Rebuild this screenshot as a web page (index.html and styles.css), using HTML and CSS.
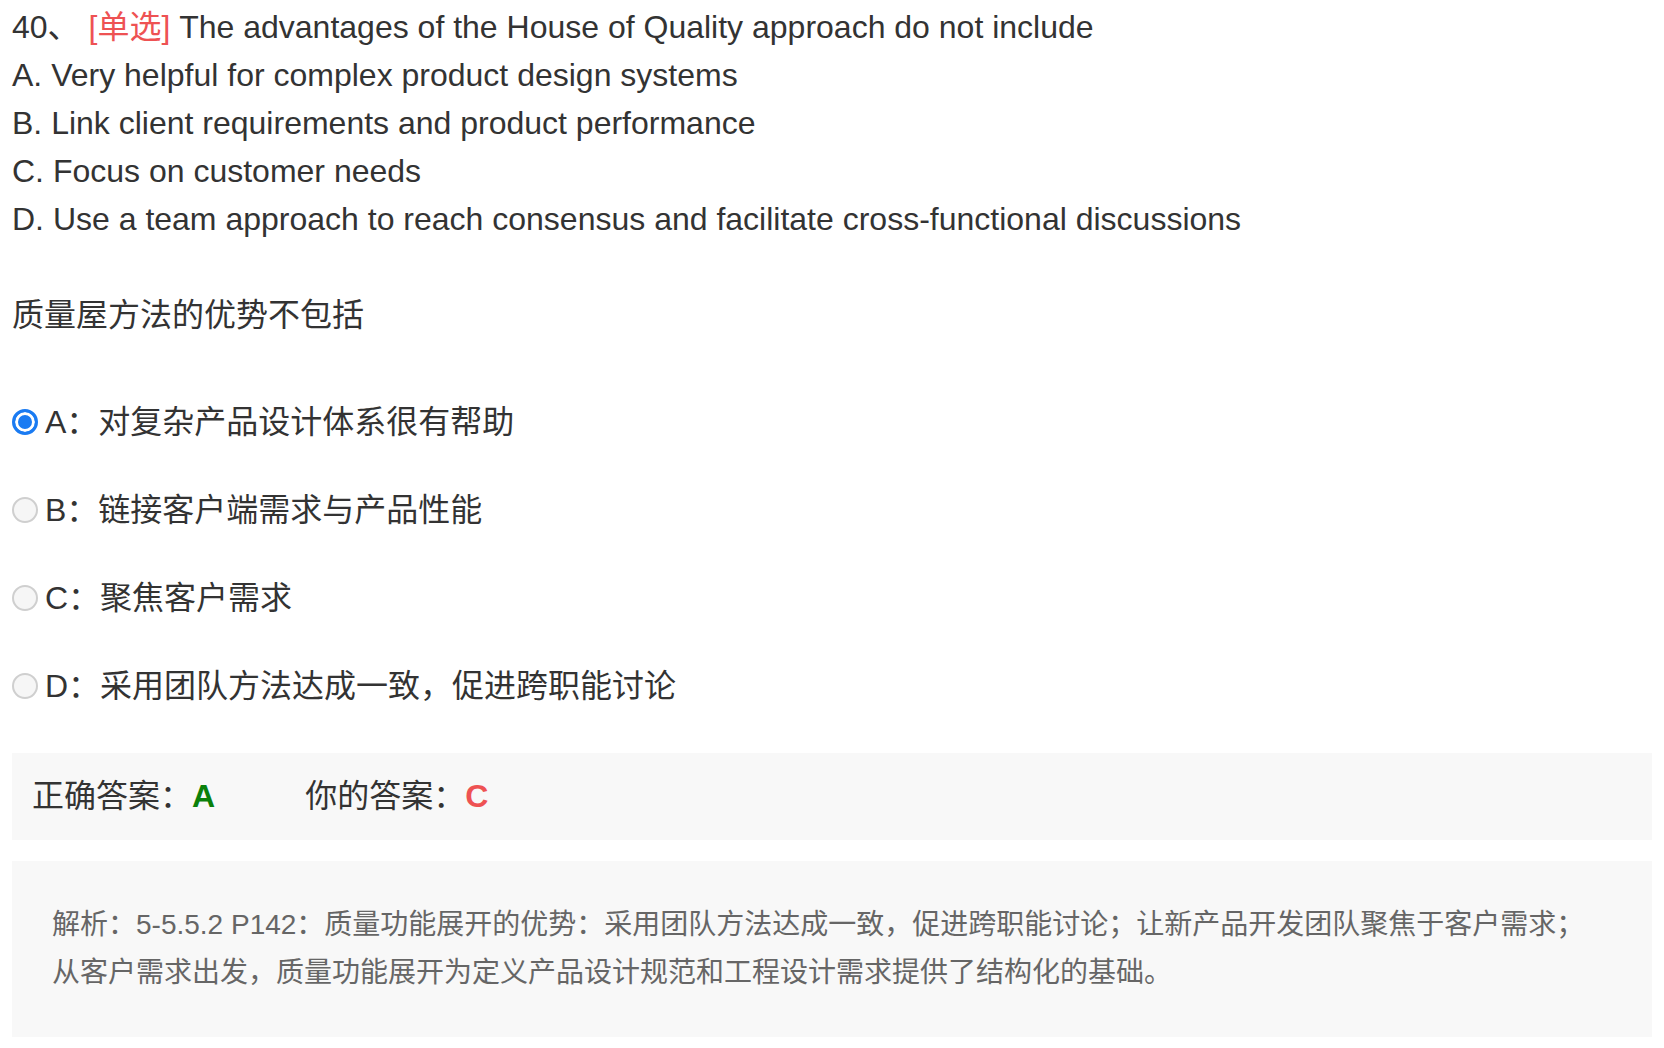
FILE: index.html
```html
<!DOCTYPE html>
<html lang="zh-CN">
<head>
<meta charset="utf-8">
<title>Question 40</title>
<link rel="stylesheet" href="styles.css">
</head>
<body>
<div class="page">
  <div class="question">
    <div class="q-line"><span>40、</span> <span class="tag">[单选]</span> The advantages of the House of Quality approach do not include</div>
    <div class="q-line">A. Very helpful for complex product design systems</div>
    <div class="q-line">B. Link client requirements and product performance</div>
    <div class="q-line">C. Focus on customer needs</div>
    <div class="q-line">D. Use a team approach to reach consensus and facilitate cross-functional discussions</div>
    <div class="cn-title">质量屋方法的优势不包括</div>
  </div>
  <div class="options">
    <div class="option"><span class="radio checked"></span><span class="opt-text">A：对复杂产品设计体系很有帮助</span></div>
    <div class="option"><span class="radio"></span><span class="opt-text">B：链接客户端需求与产品性能</span></div>
    <div class="option"><span class="radio"></span><span class="opt-text">C：聚焦客户需求</span></div>
    <div class="option"><span class="radio"></span><span class="opt-text">D：采用团队方法达成一致，促进跨职能讨论</span></div>
  </div>
  <div class="answer-box">
    <span class="ans">正确答案：<b class="right">A</b></span><span class="ans yours">你的答案：<b class="wrong">C</b></span>
  </div>
  <div class="explain">解析：5-5.5.2 P142：质量功能展开的优势：采用团队方法达成一致，促进跨职能讨论；让新产品开发团队聚焦于客户需求；从客户需求出发，质量功能展开为定义产品设计规范和工程设计需求提供了结构化的基础。</div>
</div>
</body>
</html>
```

FILE: styles.css
```css
html, body {
  margin: 0;
  padding: 0;
  background: #ffffff;
}
body {
  color: #333333;
  font-family: "Liberation Sans", "Noto Sans CJK SC", sans-serif;
}
.page {
  padding: 3px 12px 0 12px;
}
.q-line {
  font-size: 32px;
  line-height: 48px;
  white-space: nowrap;
}
.tag {
  color: #ee5253;
}
.cn-title {
  font-size: 32px;
  line-height: 48px;
  margin-top: 48px;
}
.options {
  margin-top: 39px;
}
.option {
  display: flex;
  align-items: center;
  height: 88px;
  font-size: 32px;
}
.radio {
  flex: none;
  width: 26px;
  height: 26px;
  box-sizing: border-box;
  border-radius: 50%;
  margin-right: 7px;
  background: #f6f6f6;
  border: 2px solid #cfcfcf;
}
.radio.checked {
  background: #1a7bf2;
  border: 3px solid #1a7bf2;
  box-shadow: inset 0 0 0 3px #ffffff;
}
.opt-text {
  line-height: 48px;
}
.answer-box {
  margin-top: 23px;
  background: #f8f8f8;
  padding: 20px;
  font-size: 32px;
  line-height: 47px;
  display: flex;
}
.ans b {
  font-weight: bold;
}
.right {
  color: #0b800b;
}
.wrong {
  color: #ee5253;
}
.yours {
  margin-left: 90px;
}
.explain {
  margin-top: 21px;
  background: #f8f8f8;
  padding: 40px;
  font-size: 28px;
  line-height: 48px;
  color: #666666;
}
```
